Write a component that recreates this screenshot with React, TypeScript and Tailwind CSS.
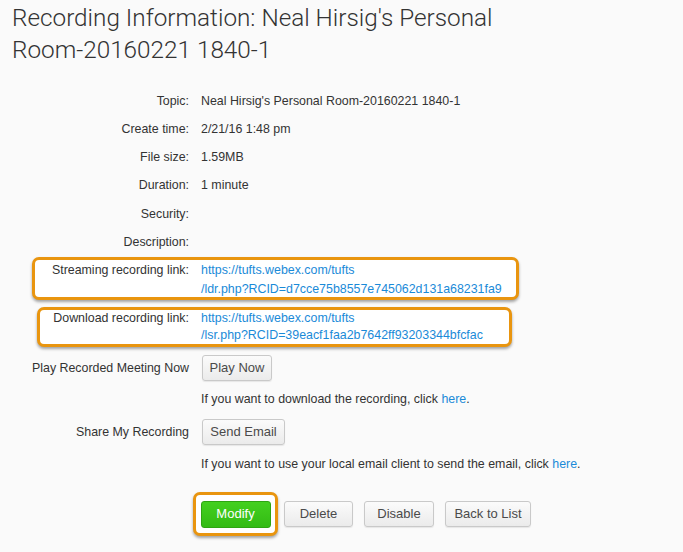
const rows: [string, string][] = [
  ['Topic:', "Neal Hirsig's Personal Room-20160221 1840-1"],
  ['Create time:', '2/21/16 1:48 pm'],
  ['File size:', '1.59MB'],
  ['Duration:', '1 minute'],
  ['Security:', ''],
  ['Description:', ''],
];

const grayBtn =
  'h-[26px] rounded-[3px] border border-[#c9c9c9] bg-gradient-to-b from-[#fbfbfb] to-[#ebebeb] text-[13px] text-[#4a4a4a] shadow-[0_1px_1px_rgba(0,0,0,0.08)]';

const highlight =
  'rounded-[7px] border-[3px] border-[#e9950f] bg-white shadow-[0_2px_3px_rgba(0,0,0,0.35)]';

const link = 'text-[#1a8ad8]';

export default function App() {
  return (
    <div className="h-[552px] w-[683px] overflow-hidden bg-[#fafafa] font-['Liberation_Sans',Arial,sans-serif] text-[12.4px] text-[#333]">
      <h1 className="pl-3 pt-[2px] font-['Roboto',sans-serif] text-[24.3px] font-light leading-[32px] text-[#333]">
        Recording Information: Neal Hirsig's Personal
        <br />
        Room-20160221 1840-1
      </h1>

      <div className="mt-[21px]">
        {rows.map(([label, value]) => (
          <div key={label} className="flex h-[28.2px] items-center">
            <div className="w-[189px] shrink-0 text-right">{label}</div>
            <div className="ml-3">{value}</div>
          </div>
        ))}
      </div>

      {/* streaming link */}
      <div className={`${highlight} ml-[32px] mt-[1px] flex h-[43px] w-[487px] pt-[1px] leading-[19px]`}>
        <div className="w-[154px] shrink-0 text-right">Streaming recording link:</div>
        <div className={`ml-3 ${link}`}>
          https://tufts.webex.com/tufts
          <br />
          /ldr.php?RCID=d7cce75b8557e745062d131a68231fa9
        </div>
      </div>

      {/* download link */}
      <div className={`${highlight} ml-[37px] mt-[7px] flex h-[40px] w-[475px] leading-[17px]`}>
        <div className="w-[149px] shrink-0 text-right">Download recording link:</div>
        <div className={`ml-3 ${link}`}>
          https://tufts.webex.com/tufts
          <br />
          /lsr.php?RCID=39eacf1faa2b7642ff93203344bfcfac
        </div>
      </div>

      <div className="mt-[8px] flex items-center">
        <div className="w-[189px] shrink-0 text-right">Play Recorded Meeting Now</div>
        <button className={`${grayBtn} ml-[13px] h-[25px] w-[70px]`}>Play Now</button>
      </div>
      <div className="ml-[201px] mt-[9px] leading-[18px]">
        If you want to download the recording, click <span className={link}>here</span>.
      </div>

      <div className="mt-[11px] flex items-center">
        <div className="w-[189px] shrink-0 text-right">Share My Recording</div>
        <button className={`${grayBtn} ml-[13px] w-[83px]`}>Send Email</button>
      </div>
      <div className="ml-[201px] mt-[10px] leading-[18px]">
        If you want to use your local email client to send the email, click{' '}
        <span className={link}>here</span>.
      </div>

      <div className="ml-[193px] mt-[19px] flex items-center">
        <div className={`${highlight} flex h-[44px] w-[85px] items-center justify-center`}>
          <button className="h-[27px] w-[70px] rounded-[3px] border border-[#2ea512] bg-gradient-to-b from-[#43d01f] to-[#33bb14] text-[13px] text-white">
            Modify
          </button>
        </div>
        <button className={`${grayBtn} ml-[6px] w-[69px]`}>Delete</button>
        <button className={`${grayBtn} ml-[11px] w-[70px]`}>Disable</button>
        <button className={`${grayBtn} ml-[11px] w-[86px]`}>Back to List</button>
      </div>
    </div>
  );
}
